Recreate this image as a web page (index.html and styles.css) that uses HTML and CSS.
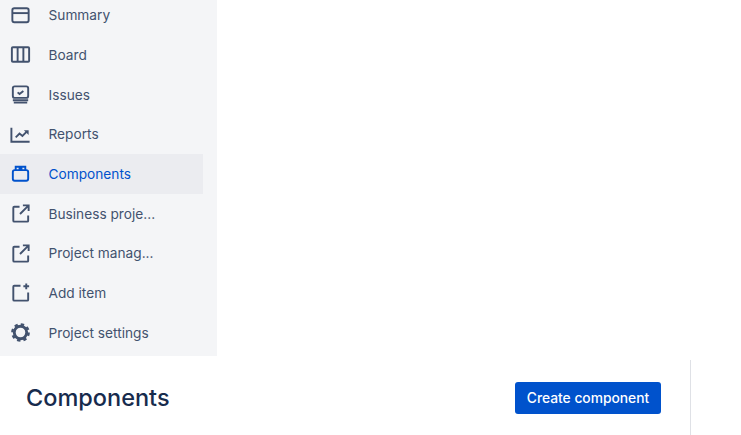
FILE: index.html
```html
<!DOCTYPE html>
<html lang="en">
<head>
    <meta charset="UTF-8">
    <title>Components</title>
    <link rel="stylesheet" href="styles.css">
</head>
<body>
    <div class="sidebar">
        <ul class="nav">
            <li class="nav-item">
                <svg class="icon" viewBox="0 0 24 24"><rect x="3.5" y="4.500" width="17" height="14.500" rx="2"/><path d="M4 9.500h16"/></svg>
                <span>Summary</span>
            </li>
            <li class="nav-item">
                <svg class="icon" viewBox="0 0 24 24"><rect x="3" y="4.500" width="18" height="15" rx="1"/><path d="M9 4.500v15M15 4.500v15"/></svg>
                <span>Board</span>
            </li>
            <li class="nav-item">
                <svg class="icon" viewBox="0 0 24 24"><rect x="4" y="3.500" width="16" height="12" rx="2"/><path d="M9 9.800l2 1.700 4-3.200M4 18h16M5 20.500h14"/></svg>
                <span>Issues</span>
            </li>
            <li class="nav-item">
                <svg class="icon" viewBox="0 0 24 24"><path d="M2.500 5v14.500h19M7 15l4-4 3 2.500 4.500-4.500"/><path class="arrow" d="M15.500 7.500H20.500V12.500z"/></svg>
                <span>Reports</span>
            </li>
            <li class="nav-item active">
                <svg class="icon" viewBox="0 0 24 24"><rect x="4" y="8.500" width="16" height="11" rx="2"/><path d="M7 8.500V5h4v3.500M13 8.500V5h4v3.500"/></svg>
                <span>Components</span>
            </li>
            <li class="nav-item">
                <svg class="icon" viewBox="0 0 24 24"><path d="M11 5H5.500a1 1 0 0 0-1 1v13.500a1 1 0 0 0 1 1H19a1 1 0 0 0 1-1V14M11.500 12.500L20 4M14.500 3.500h6v6"/></svg>
                <span>Business proje...</span>
            </li>
            <li class="nav-item">
                <svg class="icon" viewBox="0 0 24 24"><path d="M11 5H5.500a1 1 0 0 0-1 1v13.500a1 1 0 0 0 1 1H19a1 1 0 0 0 1-1V14M11.500 12.500L20 4M14.500 3.500h6v6"/></svg>
                <span>Project manag...</span>
            </li>
            <li class="nav-item">
                <svg class="icon" viewBox="0 0 24 24"><path d="M12 5H5.500a1 1 0 0 0-1 1v13.500a1 1 0 0 0 1 1H19a1 1 0 0 0 1-1V12M18 2.500v6M15 5.500h6"/></svg>
                <span>Add item</span>
            </li>
            <li class="nav-item">
                <svg class="icon" viewBox="0 0 24 24"><circle class="gear-ring" cx="12" cy="12" r="6.500"/><circle class="gear-teeth" cx="12" cy="12" r="8.500"/></svg>
                <span>Project settings</span>
            </li>
        </ul>
    </div>

    <div class="page-header">
        <h1>Components</h1>
        <button type="button" class="btn-primary">Create component</button>
    </div>
</body>
</html>
```

FILE: styles.css
```css
html, body {
    height: 100%;
}
body {
    margin: 0;
    overflow: hidden;
    background-color: #ffffff;
    font-family: Inter, "Liberation Sans", sans-serif;
}
.sidebar {
    width: 217px;
    height: 356px;
    overflow: hidden;
    background-color: #f4f5f7;
}
.nav {
    list-style: none;
    margin: -4.7px 0 0;
    padding: 0;
}
.nav-item {
    display: flex;
    align-items: center;
    width: 203px;
    height: 39.7px;
    padding-left: 9px;
    box-sizing: border-box;
    gap: 16.5px;
    font-size: 13.7px;
    color: #42526e;
}
.nav-item.active {
    background-color: #ebecf0;
    color: #0052cc;
}
.icon {
    width: 23px;
    height: 23px;
    flex-shrink: 0;
    fill: none;
    stroke: currentColor;
    stroke-width: 2;
}
.arrow {
    fill: currentColor;
    stroke: none;
}
.gear-ring {
    stroke-width: 3;
}
.gear-teeth {
    stroke-width: 2.5;
    stroke-dasharray: 3.5 3.18;
}
.page-header {
    display: flex;
    align-items: center;
    justify-content: space-between;
    width: 691px;
    height: 75px;
    box-sizing: border-box;
    margin-top: 4px;
    padding: 0 29px 0 26px;
    border-right: 1px solid #dfe1e6;
}
h1 {
    margin: 0;
    font-size: 23.5px;
    font-weight: 500;
    color: #172b4d;
}
.btn-primary {
    width: 146px;
    height: 32px;
    padding: 0;
    background-color: #0052cc;
    color: white;
    border: none;
    border-radius: 3px;
    font-family: inherit;
    font-size: 13.8px;
    font-weight: 500;
}
```
